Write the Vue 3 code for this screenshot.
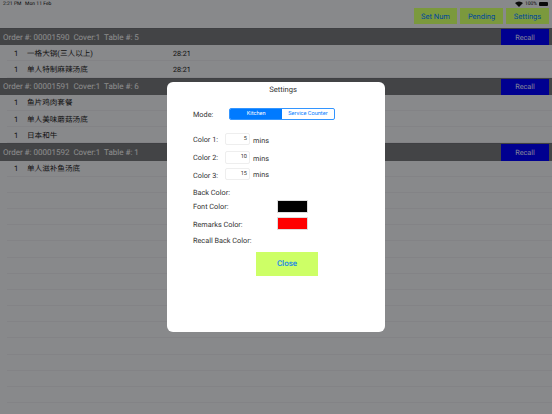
<script setup>
const orders = [
  { id: 1, title: 'Order #: 00001590  Cover:1  Table #: 5', items: [
    { name: '一格大锅(三人以上)', time: '28:21' },
    { name: '单人特制麻辣汤底', time: '28:21' },
  ] },
  { id: 2, title: 'Order #: 00001591  Cover:1  Table #: 6', items: [
    { name: '鱼片鸡肉套餐', time: '' },
    { name: '单人美味蘑菇汤底', time: '' },
    { name: '日本和牛', time: '' },
  ] },
  { id: 3, title: 'Order #: 00001592  Cover:1  Table #: 1', items: [
    { name: '单人滋补鱼汤底', time: '' },
  ] },
]
const emptyRows = 15
const colors = [
  { label: 'Color 1:', value: 5 },
  { label: 'Color 2:', value: 10 },
  { label: 'Color 3:', value: 15 },
]
</script>

<template>
  <div class="screen">
    <div class="status">
      <span>2:21 PM &nbsp; Mon 11 Feb</span>
      <span class="status-right">
        <svg width="8" height="6" viewBox="0 0 16 12"><path d="M8 12 0 4a11.5 11.5 0 0 1 16 0z" fill="#111" /></svg>
        <span>100%</span>
        <span class="battery"></span>
      </span>
    </div>
    <div class="toolbar">
      <button class="tool">Set Num</button>
      <button class="tool">Pending</button>
      <button class="tool">Settings</button>
    </div>
    <div v-for="o in orders" :key="o.id">
      <div class="bar">
        <span class="bar-title">{{ o.title }}</span>
        <button class="recall">Recall</button>
      </div>
      <div v-for="it in o.items" :key="it.name" class="row">
        <span class="qty">1</span>
        <span class="name">{{ it.name }}</span>
        <span class="time">{{ it.time }}</span>
      </div>
    </div>
    <div v-for="n in emptyRows" :key="n" class="row"></div>

    <div class="dim"></div>
    <div class="modal">
      <div class="modal-title">Settings</div>
      <div class="mode">
        <span class="label">Mode:</span>
        <div class="segments">
          <span class="seg on">Kitchen</span>
          <span class="seg">Service Counter</span>
        </div>
      </div>
      <div class="colors">
        <div v-for="c in colors" :key="c.label" class="color-row">
          <span class="label color-label">{{ c.label }}</span>
          <span class="num">{{ c.value }}</span>
          <span class="label mins">mins</span>
        </div>
      </div>
      <div class="swatches">
        <div class="sw-row back"><span class="label">Back Color:</span></div>
        <div class="sw-row"><span class="label sw-label">Font Color:</span><span class="swatch black"></span></div>
        <div class="sw-row remarks"><span class="label sw-label">Remarks Color:</span><span class="swatch red"></span></div>
        <div class="sw-row recall-row"><span class="label">Recall Back Color:</span></div>
      </div>
      <button class="close">Close</button>
    </div>
  </div>
</template>

<style scoped>
.screen {
  position: relative;
  width: 552px;
  height: 414px;
  overflow: hidden;
  background: #e3e4e8;
  font-family: Roboto, "Liberation Sans", "Noto Sans CJK SC", sans-serif;
  text-rendering: geometricPrecision;
  color: #222;
}
.status {
  height: 8px;
  padding: 0 4px 0 3px;
  display: flex;
  justify-content: space-between;
  align-items: center;
  font-size: 5px;
  line-height: 8px;
  color: #111;
}
.status-right { display: flex; align-items: center; gap: 2px; }
.battery { width: 9px; height: 4px; background: #111; border-radius: 1px; }
.toolbar {
  height: 20px;
  display: flex;
  justify-content: flex-end;
  gap: 3px;
  padding-right: 3px;
}
.tool {
  width: 43px;
  height: 16px;
  margin: 0;
  padding: 0;
  border: 0;
  background: #cdff66;
  color: #007aff;
  font: 7.5px Roboto, "Liberation Sans", sans-serif;
  text-rendering: geometricPrecision;
}
.bar {
  height: 17.3px;
  display: flex;
  align-items: center;
  justify-content: space-between;
  background: #707276;
  border-top: 1px solid #6a6c70;
  box-sizing: border-box;
}
.bar-title { padding-left: 3px; font-size: 8px; color: #e8e8e8; white-space: pre; }
.recall {
  width: 48px;
  height: 16.3px;
  margin: 0 3px 0 0;
  padding: 0;
  border: 0;
  background: #0000f0;
  color: #dcdcff;
  font: 7.3px Roboto, "Liberation Sans", sans-serif;
  text-rendering: geometricPrecision;
}
.row {
  height: 16.17px;
  box-sizing: border-box;
  display: flex;
  align-items: center;
  padding-top: 1px;
  font-size: 7.6px;
  color: #222;
  border-bottom: 1px solid #dadbdf;
  margin-left: 7px;
}
.qty { width: 20px; padding-left: 7px; box-sizing: border-box; }
.name { width: 146px; }
.time { font-size: 7.2px; }
.dim {
  position: absolute;
  inset: 0;
  background: rgba(0, 0, 0, 0.4);
}
.modal {
  position: absolute;
  left: 167px;
  top: 82px;
  width: 218px;
  height: 250px;
  background: #fff;
  border-radius: 6px;
  box-sizing: border-box;
  padding: 0 26px;
  display: flex;
  flex-direction: column;
  color: #333;
}
.modal-title {
  height: 15px;
  line-height: 15px;
  margin: 0 -26px;
  padding-left: 14px;
  text-align: center;
  font-size: 7.6px;
}
.label { font-size: 7.3px; color: #333; white-space: nowrap; }
.mode {
  margin-top: 11px;
  height: 12.4px;
  display: flex;
  align-items: center;
}
.mode .label { width: 36.3px; }
.segments {
  display: flex;
  width: 105.5px;
  height: 12.4px;
  box-sizing: border-box;
  border: 1px solid #3395ff;
  border-radius: 2px;
  overflow: hidden;
}
.seg {
  flex: 1;
  text-align: center;
  font-size: 5.6px;
  line-height: 10.4px;
  color: #007aff;
}
.seg.on { background: #007aff; color: #fff; }
.colors { margin-top: 12.6px; display: flex; flex-direction: column; }
.color-row { height: 12.5px; display: flex; align-items: center; }
.color-row:nth-child(2) { margin-top: 6px; }
.color-row:nth-child(3) { margin-top: 4px; }
.color-row:nth-child(1) .mins { margin-top: 3px; }
.color-row:nth-child(2) .mins { margin-top: 1px; }
.color-row:nth-child(3) .color-label { margin-top: 3px; }
.color-label { width: 32px; }
.num {
  width: 25px;
  height: 12.5px;
  box-sizing: border-box;
  border: 1px solid #eee;
  border-radius: 2px;
  font-size: 5.6px;
  line-height: 10.5px;
  text-align: right;
  padding-right: 2px;
}
.mins { margin-left: 3px; }
.swatches { margin-top: 5.5px; display: flex; flex-direction: column; }
.sw-row { height: 14px; display: flex; align-items: center; }
.sw-label { width: 83.5px; }
.swatch { width: 31.5px; height: 13px; box-sizing: border-box; border: 1px solid #ddd; }
.black { background: #000; }
.red { background: #f00; }
.remarks { margin-top: 3px; height: 13px; }
.remarks .label { margin-top: 3px; }
.recall-row { margin-top: 4px; }
.close {
  margin: 4px 0 0 62.7px;
  width: 62.6px;
  height: 24px;
  padding: 0;
  border: 0;
  background: #cdff66;
  color: #1a86e8;
  font: 500 8px Roboto, "Liberation Sans", sans-serif;
  text-rendering: geometricPrecision;
}
</style>
